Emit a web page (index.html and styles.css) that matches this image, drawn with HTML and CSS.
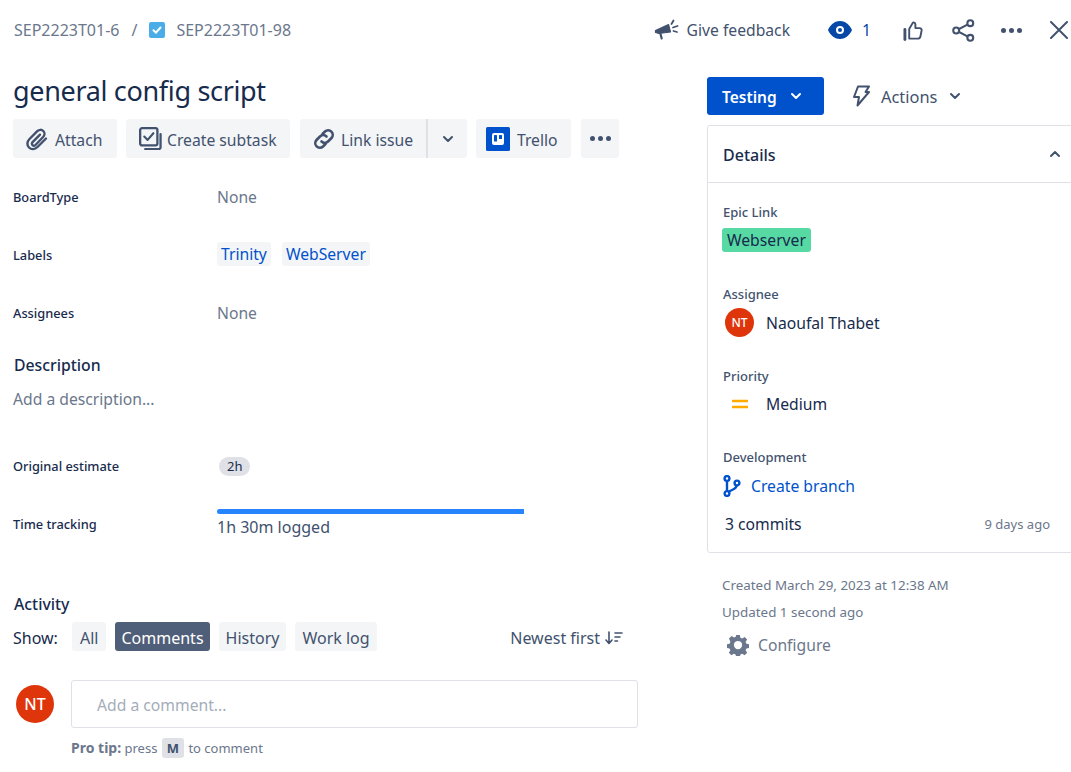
FILE: index.html
```html
<!DOCTYPE html>
<html>

<head>
    <title>SEP2223T01-98</title>
    <link rel="stylesheet" href="styles.css">
</head>

<body>
    <header class="topbar">
        <nav class="crumbs">
            <span>SEP2223T01-6</span>
            <span class="crumb-sep">/</span>
            <svg class="crumb-icon" viewBox="0 0 16 16"><rect width="16" height="16" rx="2" fill="#4bade8"/><path d="M4.5 8.200 7 10.700 11.500 5.500" fill="none" stroke="#fff" stroke-width="2" stroke-linecap="round" stroke-linejoin="round"/></svg>
            <span>SEP2223T01-98</span>
        </nav>
        <div class="top-actions">
            <div class="feedback">
                <svg class="icon-feedback" viewBox="0 0 24 24"><path d="M1 12.500 14 6.500 16 14 4.500 15.500 1 14.500Z" fill="#42526e" stroke="#42526e" stroke-width="1.200" stroke-linejoin="round"/><path d="M6 16 7.200 20.500" stroke="#42526e" stroke-width="2.200" stroke-linecap="round"/><path d="M17 6 19 2.500M18.500 9.500 23 8M19 13 22.500 14" stroke="#42526e" stroke-width="1.800" stroke-linecap="round"/></svg>
                <span>Give feedback</span>
            </div>
            <div class="watch">
                <svg class="icon-eye" viewBox="0 0 24 20"><path fill-rule="evenodd" d="M12 1C6 1 1.500 6 0 10c1.500 4 6 9 12 9s10.500-5 12-9c-1.500-4-6-9-12-9Zm0 5a4 4 0 1 1 0 8 4 4 0 0 1 0-8Z" fill="#0747a6"/><circle cx="12" cy="10" r="2" fill="#0747a6"/></svg>
                <span>1</span>
            </div>
            <svg class="icon-like" viewBox="0 0 22 22"><path d="M6.500 9.500 10.500 2.500c1.500 0 2.500 1 2.500 2.500v3.500h4.500c1.400 0 2.300 1.100 2 2.500l-1.200 6c-.3 1.400-1.200 2.500-2.800 2.500H6.500Z" fill="none" stroke="#42526e" stroke-width="2" stroke-linejoin="round" stroke-linecap="round"/><path d="M2 10v10.500" stroke="#42526e" stroke-width="3" stroke-linecap="round"/></svg>
            <svg class="icon-share" viewBox="0 0 22 22"><path d="M17.500 4 4 11 17.500 18" fill="none" stroke="#42526e" stroke-width="2"/><circle cx="17.500" cy="4" r="2.800" fill="#fff" stroke="#42526e" stroke-width="2"/><circle cx="4" cy="11" r="2.800" fill="#fff" stroke="#42526e" stroke-width="2"/><circle cx="17.500" cy="18" r="2.800" fill="#fff" stroke="#42526e" stroke-width="2"/></svg>
            <div class="dots dots-top"><i></i><i></i><i></i></div>
            <svg class="icon-close" viewBox="0 0 18 18"><path d="M1 1 17 17M17 1 1 17" stroke="#42526e" stroke-width="2" stroke-linecap="round"/></svg>
        </div>
    </header>

    <div class="columns">
        <main class="main">
            <h1 class="title">general config script</h1>

            <div class="toolbar">
                <div class="btn btn-attach">
                    <svg class="icon-attach" viewBox="0 0 24 24"><path d="M21 11.500 12.500 20c-2.700 2.700-6.300 2.700-8.500.5s-2.200-5.800.5-8.500l7.800-7.800c1.800-1.800 4.400-1.800 6-.2s1.600 4.200-.2 6L10.500 18c-.9.900-2.200.9-3 .1s-.8-2.100.1-3L15 7.700" fill="none" stroke="#42526e" stroke-width="2.400" stroke-linecap="round"/></svg>
                    <span>Attach</span>
                </div>
                <div class="btn btn-subtask">
                    <svg class="icon-subtask" viewBox="0 0 24 24"><path d="M22.500 7.500V21a2 2 0 0 1-2 2H6.500" fill="none" stroke="#42526e" stroke-width="2.400" stroke-linecap="round"/><rect x="1.200" y="1.200" width="18" height="18" rx="2" fill="#f4f5f7" stroke="#42526e" stroke-width="2.400"/><path d="M5.500 10 9 13.500 15 6.500" fill="none" stroke="#42526e" stroke-width="2.200" stroke-linecap="round" stroke-linejoin="round"/></svg>
                    <span>Create subtask</span>
                </div>
                <div class="btn-group">
                    <div class="btn btn-link">
                        <svg class="icon-link" viewBox="0 0 24 24"><path d="M10.500 7 13 4.500a4.600 4.600 0 0 1 6.500 6.500L16 14.500a4.600 4.600 0 0 1-6.500 0" fill="none" stroke="#42526e" stroke-width="2.600" stroke-linecap="round"/><path d="M13.500 17 11 19.500A4.600 4.600 0 0 1 4.500 13L8 9.500a4.600 4.600 0 0 1 6.500 0" fill="none" stroke="#42526e" stroke-width="2.600" stroke-linecap="round"/></svg>
                        <span>Link issue</span>
                    </div>
                    <div class="btn btn-caret">
                        <svg class="chevron" viewBox="0 0 12 8"><path d="M2 2 6 6 10 2" fill="none" stroke="#42526e" stroke-width="2" stroke-linecap="round" stroke-linejoin="round"/></svg>
                    </div>
                </div>
                <div class="btn btn-trello">
                    <svg class="icon-trello" viewBox="0 0 24 24"><rect width="24" height="24" rx="1.500" fill="#0052cc"/><rect x="6" y="6" width="12" height="12" rx="2" fill="#fff"/><rect x="8" y="8" width="3" height="6.500" rx=".5" fill="#0052cc"/><rect x="13" y="8" width="3" height="4" rx=".5" fill="#0052cc"/></svg>
                    <span>Trello</span>
                </div>
                <div class="btn btn-more">
                    <div class="dots"><i></i><i></i><i></i></div>
                </div>
            </div>

            <div class="field field-first">
                <div class="field-label">BoardType</div>
                <div class="field-muted">None</div>
            </div>
            <div class="field">
                <div class="field-label">Labels</div>
                <div class="labels">
                    <span class="label">Trinity</span>
                    <span class="label">WebServer</span>
                </div>
            </div>
            <div class="field">
                <div class="field-label">Assignees</div>
                <div class="field-muted">None</div>
            </div>

            <h2 class="heading heading-desc">Description</h2>
            <div class="desc-placeholder">Add a description...</div>

            <div class="field field-estimate">
                <div class="field-label">Original estimate</div>
                <div class="estimate-wrap"><span class="estimate">2h</span></div>
            </div>
            <div class="field">
                <div class="field-label">Time tracking</div>
                <div class="tracking">
                    <div class="tracking-bar"></div>
                    <div class="tracking-text">1h 30m logged</div>
                </div>
            </div>

            <h2 class="heading heading-activity">Activity</h2>
            <div class="activity-bar">
                <span class="show-label">Show:</span>
                <span class="tab tab-all">All</span>
                <span class="tab tab-active">Comments</span>
                <span class="tab">History</span>
                <span class="tab">Work log</span>
                <div class="sort">
                    <span>Newest first</span>
                    <svg class="icon-sort" viewBox="0 0 18 14"><path d="M4 1V12M1 9 4 12.500 7 9" fill="none" stroke="#42526e" stroke-width="1.600" stroke-linecap="round" stroke-linejoin="round"/><path d="M10 2H17M10 6H15M10 10H12.500" stroke="#42526e" stroke-width="1.600" stroke-linecap="round"/></svg>
                </div>
            </div>

            <div class="comment-row">
                <div class="avatar avatar-big">NT</div>
                <div class="comment-box">Add a comment...</div>
            </div>
            <div class="pro-tip"><b>Pro tip:</b> press <span class="kbd">M</span> to comment</div>
        </main>

        <aside class="side">
            <div class="side-actions">
                <div class="btn-status">
                    <span>Testing</span>
                    <svg class="chevron" viewBox="0 0 12 8"><path d="M2 2 6 6 10 2" fill="none" stroke="#fff" stroke-width="2" stroke-linecap="round" stroke-linejoin="round"/></svg>
                </div>
                <div class="actions">
                    <svg class="icon-bolt" viewBox="0 0 20 24"><path d="M7 2.500H18L14.500 8H18L6.500 21.500 8 13H3Z" fill="none" stroke="#42526e" stroke-width="2" stroke-linejoin="round"/></svg>
                    <span>Actions</span>
                    <svg class="chevron" viewBox="0 0 12 8"><path d="M2 2 6 6 10 2" fill="none" stroke="#42526e" stroke-width="2" stroke-linecap="round" stroke-linejoin="round"/></svg>
                </div>
            </div>

            <section class="panel">
                <div class="panel-head">
                    <span>Details</span>
                    <svg class="chevron" viewBox="0 0 12 8"><path d="M2 6 6 2 10 6" fill="none" stroke="#42526e" stroke-width="2" stroke-linecap="round" stroke-linejoin="round"/></svg>
                </div>
                <div class="panel-body">
                    <div class="side-label side-label-first">Epic Link</div>
                    <span class="epic">Webserver</span>

                    <div class="side-label side-label-assignee">Assignee</div>
                    <div class="side-value side-value-assignee">
                        <span class="side-icon"><span class="avatar">NT</span></span>
                        <span>Naoufal Thabet</span>
                    </div>

                    <div class="side-label side-label-priority">Priority</div>
                    <div class="side-value side-value-priority">
                        <span class="side-icon"><svg class="icon-priority" viewBox="0 0 16 10"><path d="M1 2H15M1 8H15" stroke="#ffab00" stroke-width="2.600" stroke-linecap="round"/></svg></span>
                        <span>Medium</span>
                    </div>

                    <div class="side-label side-label-dev">Development</div>
                    <div class="branch">
                        <svg class="icon-branch" viewBox="0 0 18 22"><path d="M4 5V16M14 9c0 4-2.500 5-5 6l-3 1.500" fill="none" stroke="#0052cc" stroke-width="2.400"/><circle cx="4" cy="3.500" r="2.400" fill="#fff" stroke="#0052cc" stroke-width="2.400"/><circle cx="4" cy="18.500" r="2.400" fill="#fff" stroke="#0052cc" stroke-width="2.400"/><circle cx="14" cy="8" r="2.400" fill="#fff" stroke="#0052cc" stroke-width="2.400"/></svg>
                        <span>Create branch</span>
                    </div>
                    <div class="commits">
                        <span>3 commits</span>
                        <span class="commits-date">9 days ago</span>
                    </div>
                </div>
            </section>

            <div class="dates dates-first">Created March 29, 2023 at 12:38 AM</div>
            <div class="dates">Updated 1 second ago</div>
            <div class="configure">
                <svg class="icon-gear" viewBox="0 0 24 24"><path fill-rule="evenodd" d="M10 1h4l.6 3 2 .9 2.600-1.700 2.800 2.800-1.700 2.600.9 2 3 .6v4l-3 .6-.9 2 1.700 2.600-2.800 2.800-2.600-1.700-2 .9-.6 3h-4l-.6-3-2-.9-2.600 1.700-2.800-2.800 1.700-2.600-.9-2-3-.6v-4l3-.6.9-2L2.200 5l2.800-2.800 2.600 1.700 2-.9ZM12 7.500a4.500 4.500 0 1 0 0 9 4.500 4.500 0 0 0 0-9Z" fill="#6b778c"/></svg>
                <span>Configure</span>
            </div>
        </aside>
    </div>
</body>

</html>
```

FILE: styles.css
```css
html,
body {
    margin: 0;
    height: 772px;
    overflow: hidden;
}

body {
    font-family: "Noto Sans", Arial, sans-serif;
    font-size: 15.7px;
    color: #172b4d;
    background-color: #fff;
}

.topbar {
    display: flex;
    align-items: center;
    justify-content: space-between;
    height: 60px;
    padding-left: 14px;
}

.crumbs {
    display: flex;
    align-items: center;
    color: #6b778c;
    font-size: 16px;
}

.crumb-sep {
    margin: 0 12px;
}

.crumb-icon {
    width: 16px;
    height: 16px;
    margin-right: 11px;
}

.top-actions {
    display: flex;
    align-items: center;
    padding-right: 3px;
}

.feedback {
    display: flex;
    align-items: center;
    color: #42526e;
    margin-right: 38px;
}

.icon-feedback {
    width: 25px;
    height: 24px;
    margin-right: 8px;
}

.watch {
    display: flex;
    align-items: center;
    color: #0747a6;
    margin-right: 32px;
}

.icon-eye {
    width: 24px;
    height: 20px;
    margin-right: 10px;
}

.icon-like {
    width: 21px;
    height: 21px;
    margin-right: 28px;
}

.icon-share {
    width: 23px;
    height: 23px;
    margin-right: 26px;
}

.dots {
    display: flex;
    gap: 3px;
}

.dots i {
    width: 5px;
    height: 5px;
    border-radius: 50%;
    background-color: #42526e;
}

.dots-top {
    margin-right: 28px;
}

.icon-close {
    width: 18px;
    height: 18px;
}

.columns {
    display: flex;
}

.main {
    width: 707px;
    padding-left: 13px;
    box-sizing: border-box;
    flex-shrink: 0;
}

.title {
    font-size: 27px;
    font-weight: 400;
    letter-spacing: -0.33px;
    line-height: 40px;
    margin: 11px 0 8px;
}

.toolbar {
    display: flex;
    height: 39px;
}

.btn {
    display: flex;
    align-items: center;
    height: 39px;
    box-sizing: border-box;
    background-color: #f4f5f7;
    border-radius: 3px;
    color: #42526e;
}

.btn span {
    margin-top: 2px;
}

.btn-attach {
    width: 104px;
    padding-left: 12px;
    margin-right: 9px;
}

.icon-attach {
    width: 24px;
    height: 24px;
    margin-right: 6px;
}

.btn-subtask {
    width: 164px;
    padding-left: 13px;
    margin-right: 10px;
}

.icon-subtask {
    width: 23px;
    height: 23px;
    margin-right: 5px;
}

.btn-group {
    display: flex;
    margin-right: 9px;
}

.btn-link {
    width: 128px;
    padding-left: 12px;
    border-radius: 3px 0 0 3px;
    border-right: 2px solid #dfe1e6;
}

.icon-link {
    width: 24px;
    height: 24px;
    margin-right: 5px;
}

.btn-caret {
    width: 39px;
    justify-content: center;
    border-radius: 0 3px 3px 0;
}

.chevron {
    width: 12px;
    height: 8px;
}

.btn-trello {
    width: 95px;
    padding-left: 10px;
    margin-right: 10px;
}

.icon-trello {
    width: 24px;
    height: 24px;
    margin-right: 7px;
}

.btn-more {
    width: 38px;
    justify-content: center;
}

.field {
    display: grid;
    grid-template-columns: 204px 1fr;
    align-items: center;
    height: 58px;
}

.field-first {
    margin-top: 10px;
}

.field-estimate {
    margin-top: 27px;
}

.field-label {
    font-size: 12.8px;
    font-weight: 500;
}

.field-muted {
    color: #6b778c;
}

.labels {
    display: flex;
    gap: 11px;
    margin-top: -2px;
}

.label {
    background-color: #f4f5f7;
    color: #0052cc;
    border-radius: 3px;
    padding: 0 4px;
    line-height: 24px;
}

.heading {
    font-size: 15.8px;
    font-weight: 500;
    line-height: 22px;
    margin: 0 0 0 1px;
}

.heading-desc {
    margin-top: 12px;
}

.heading-activity {
    margin-top: 40px;
}

.desc-placeholder {
    color: #6b778c;
    line-height: 22px;
    margin-top: 12px;
}

.estimate-wrap {
    margin-top: -2px;
}

.estimate {
    display: inline-block;
    margin-left: 2px;
    padding: 0 8px;
    border-radius: 10px;
    background-color: #dfe1e6;
    font-size: 13px;
    line-height: 19px;
}

.tracking {
    margin-top: -2px;
}

.tracking-bar {
    width: 307px;
    height: 5px;
    border-radius: 3px 0 0 3px;
    background-color: #2684ff;
}

.tracking-text {
    color: #42526e;
    font-size: 16px;
    line-height: 22px;
    margin-top: 2px;
}

.activity-bar {
    display: flex;
    align-items: center;
    height: 29px;
    margin-top: 7px;
    width: 610px;
    font-size: 16px;
}

.show-label {
    width: 59px;
    padding-top: 2px;
}

.tab {
    line-height: 26px;
    padding: 3px 7px 0;
    margin-right: 9px;
    border-radius: 3px;
    background-color: #f4f5f7;
    color: #42526e;
}

.tab-all {
    padding: 3px 8px 0;
}

.tab-active {
    padding: 3px 6px 0;
    background-color: #505f79;
    color: #fff;
}

.sort {
    display: flex;
    align-items: center;
    margin-left: auto;
    padding-top: 2px;
    color: #42526e;
}

.icon-sort {
    width: 18px;
    height: 14px;
    margin-left: 5px;
}

.comment-row {
    display: flex;
    align-items: center;
    margin-top: 29px;
    height: 48px;
}

.avatar {
    display: flex;
    align-items: center;
    justify-content: center;
    width: 29px;
    height: 29px;
    border-radius: 50%;
    background-color: #de350b;
    color: #fff;
    font-size: 12px;
    font-weight: 500;
}

.avatar-big {
    width: 38px;
    height: 38px;
    margin-left: 3px;
    margin-right: 17px;
    font-size: 16px;
}

.comment-box {
    width: 567px;
    height: 48px;
    line-height: 48px;
    padding-left: 25px;
    box-sizing: border-box;
    border: 1px solid #dfe1e6;
    border-radius: 3px;
    color: #a5adba;
}

.pro-tip {
    margin: 10px 0 0 58px;
    font-size: 13px;
    line-height: 20px;
    color: #6b778c;
}

.pro-tip b {
    font-size: 14px;
}

.kbd {
    display: inline-block;
    background-color: #dfe1e6;
    color: #42526e;
    font-weight: 700;
    border-radius: 3px;
    padding: 0 5px;
    margin: 0 1px;
}

.side {
    width: 364px;
    flex-shrink: 0;
    padding-top: 17px;
}

.side-actions {
    display: flex;
    align-items: center;
    height: 38px;
}

.btn-status {
    display: flex;
    align-items: center;
    gap: 13px;
    width: 117px;
    height: 38px;
    padding-left: 15px;
    box-sizing: border-box;
    background-color: #0052cc;
    border-radius: 3px;
    color: #fff;
    font-size: 15.5px;
    font-weight: 600;
}

.btn-status span {
    margin-top: 2px;
}

.actions {
    display: flex;
    align-items: center;
    color: #42526e;
    font-size: 16.4px;
    margin-left: 27px;
}

.icon-bolt {
    width: 20px;
    height: 24px;
    margin-right: 10px;
}

.actions .chevron {
    margin-left: 12px;
}

.panel {
    margin-top: 10px;
    border: 1px solid #dfe1e6;
    border-radius: 3px;
    height: 428px;
    box-sizing: border-box;
    width: 380px;
}

.panel-head {
    display: flex;
    align-items: center;
    height: 56px;
    padding-left: 15px;
    border-bottom: 1px solid #dfe1e6;
    font-size: 16px;
    font-weight: 500;
}

.panel-head span {
    margin-top: 2px;
}

.panel-head .chevron {
    margin-left: 273px;
}

.panel-body {
    padding-left: 15px;
    width: 327px;
}

.side-label {
    font-size: 13px;
    line-height: 18px;
    color: #42526e;
    font-weight: 500;
}

.side-label-first {
    margin-top: 20px;
}

.side-label-assignee {
    margin-top: 33px;
}

.side-label-priority {
    margin-top: 30px;
}

.side-label-dev {
    margin-top: 32px;
}

.epic {
    display: inline-block;
    margin: 7px 0 0 -1px;
    padding: 0 5px;
    line-height: 24px;
    border-radius: 3px;
    background-color: #57d9a3;
}

.side-value {
    display: flex;
    align-items: center;
}

.side-value-assignee {
    margin-top: 5px;
    height: 29px;
}

.side-value-priority {
    margin-top: 7px;
    height: 24px;
}

.side-icon {
    display: flex;
    justify-content: center;
    width: 43px;
    box-sizing: border-box;
    padding-right: 10px;
}

.icon-priority {
    width: 16px;
    height: 10px;
}

.branch {
    display: flex;
    align-items: center;
    margin-top: 8px;
    height: 24px;
    color: #0052cc;
}

.icon-branch {
    width: 18px;
    height: 22px;
    margin-right: 10px;
}

.commits {
    display: flex;
    justify-content: space-between;
    align-items: center;
    margin-top: 14px;
    height: 24px;
    padding-left: 2px;
}

.commits-date {
    font-size: 13px;
    color: #6b778c;
}

.dates {
    font-size: 13.4px;
    line-height: 18px;
    color: #6b778c;
    margin: 9px 0 0 15px;
}

.dates-first {
    margin-top: 23px;
}

.configure {
    display: flex;
    align-items: center;
    color: #6b778c;
    margin: 13px 0 0 20px;
}

.icon-gear {
    width: 22px;
    height: 22px;
    margin-right: 9px;
}
```
